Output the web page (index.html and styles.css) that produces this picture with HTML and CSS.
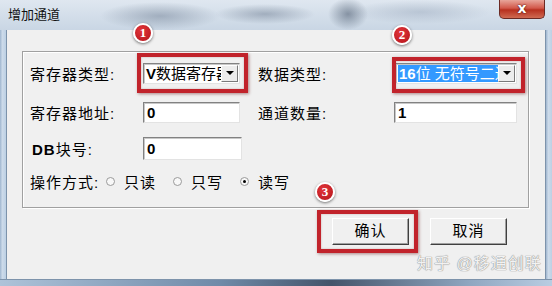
FILE: index.html
```html
<!DOCTYPE html>
<html lang="zh-CN">
<head>
    <meta charset="UTF-8">
    <title>增加通道</title>
    <link rel="stylesheet" href="styles.css">
</head>
<body>
    <div class="window">
        <div class="titlebar">
            <span class="title">增加通道</span>
            <div class="close-btn">x</div>
        </div>
        <div class="frame-row">
            <div class="frame-side"></div>
            <div class="client">
                <div class="group">
                    <div class="row row-1">
                        <span class="label">寄存器类型:</span>
                        <div class="combo combo-left">
                            <span class="combo-text"><b>V</b>数据寄存器</span>
                            <span class="combo-arrow"></span>
                        </div>
                        <span class="label label-right">数据类型:</span>
                        <div class="combo combo-right">
                            <span class="combo-text"><span class="selected"><b>16</b>位 无符号二进</span></span>
                            <span class="combo-arrow"></span>
                        </div>
                    </div>
                    <div class="row row-2">
                        <span class="label">寄存器地址:</span>
                        <div class="edit edit-left"><b>0</b></div>
                        <span class="label label-right">通道数量:</span>
                        <div class="edit edit-right"><b>1</b></div>
                    </div>
                    <div class="row row-3">
                        <span class="label label-db"><b>DB</b>块号:</span>
                        <div class="edit edit-db"><b>0</b></div>
                    </div>
                    <div class="row row-4">
                        <span class="label label-op">操作方式:</span>
                        <span class="radio"></span><span class="radio-text">只读</span>
                        <span class="radio"></span><span class="radio-text">只写</span>
                        <span class="radio checked"></span><span class="radio-text">读写</span>
                    </div>
                </div>
                <div class="buttons">
                    <div class="btn">确认</div>
                    <div class="btn">取消</div>
                </div>
            </div>
            <div class="frame-side"></div>
        </div>
        <div class="frame-bottom"></div>

        <!-- annotation marks drawn over the dialog -->
        <div class="mark-box box-1"></div>
        <div class="mark-box box-2"></div>
        <div class="mark-box box-3"></div>
        <div class="badge badge-1">1</div>
        <div class="badge badge-2">2</div>
        <div class="badge badge-3">3</div>
        <div class="watermark">知乎 @移通创联</div>
    </div>
</body>
</html>
```

FILE: styles.css
```css
* {
    box-sizing: border-box;
    margin: 0;
    padding: 0;
}
body {
    width: 552px;
    height: 286px;
    overflow: hidden;
    background: #ffffff;
    font-family: "Liberation Sans", "Noto Sans CJK SC", sans-serif;
    font-size: 15px;
    color: #000;
}
.window {
    position: relative;
    width: 552px;
    height: 286px;
    display: flex;
    flex-direction: column;
    background: #b9cde2;
}
.titlebar {
    height: 30px;
    display: flex;
    align-items: flex-start;
    justify-content: space-between;
    background:
        radial-gradient(ellipse 60px 14px at 160px 16px, rgba(120, 135, 155, 0.55), transparent),
        radial-gradient(ellipse 50px 10px at 265px 14px, rgba(110, 125, 145, 0.5), transparent),
        radial-gradient(ellipse 20px 16px at 348px 14px, rgba(80, 95, 115, 0.6), transparent),
        radial-gradient(ellipse 70px 12px at 420px 12px, rgba(150, 165, 185, 0.45), transparent),
        linear-gradient(#dfe7f0, #c9d6e4);
}
.title {
    font-size: 13px;
    line-height: 16px;
    margin: 7px 0 0 8px;
    color: #111;
}
.close-btn {
    width: 46px;
    height: 19px;
    margin-right: 7px;
    border: 1px solid #6b2a24;
    border-top: none;
    border-radius: 0 0 5px 5px;
    background: linear-gradient(#e8a59a, #d2584a 45%, #b7301f 55%, #cf6a52);
    color: #fff;
    font-family: "DejaVu Sans", sans-serif;
    font-weight: bold;
    font-size: 14px;
    line-height: 16px;
    text-align: center;
    text-shadow: 0 0 2px #5a1810, 0 0 1px #5a1810;
}
.frame-row {
    flex: 1;
    display: flex;
}
.frame-side {
    width: 7px;
    background: linear-gradient(90deg, #9fb6cf, #cddbea 40%, #bcd0e4);
    border-right: 1px solid #7d93ab;
}
.frame-row .frame-side:last-child {
    border-right: none;
    border-left: 1px solid #7d93ab;
}
.client {
    flex: 1;
    position: relative;
    background: #f0f0f0;
    padding: 21px 16px 0 15px;
}
.frame-bottom {
    height: 7px;
    border-top: 1px solid #7d93ab;
    background: linear-gradient(90deg, #aec3d9, #6f8aa8 40%, #44546a 60%, #8fa6c0 85%, #b9cde2);
}
.group {
    height: 157px;
    border: 1px solid #a0a0a0;
    box-shadow: inset 1px 1px 0 #fff, 1px 1px 0 #fff;
    padding: 10px 0 0 7px;
}
.row {
    display: flex;
    align-items: center;
}
.row-1 { height: 22px; }
.row-2 { height: 22px; margin-top: 17px; }
.row-3 { height: 23px; margin-top: 14px; }
.row-4 { height: 20px; margin-top: 11px; }
.label {
    width: 113px;
    white-space: nowrap;
    letter-spacing: 1px;
}
.label-right {
    width: 136px;
    margin-left: 18px;
}
.label-db {
    padding-left: 2px;
}
.label-op {
    width: 76px;
}
b {
    font-family: "Liberation Sans", sans-serif;
    font-weight: bold;
}
.combo {
    height: 21px;
    display: flex;
    align-items: center;
    background: #fff;
    border: 1px solid;
    border-color: #828282 #e3e3e3 #e3e3e3 #828282;
    box-shadow: inset 1px 1px 0 #c8c8c8;
    overflow: hidden;
}
.combo-left { width: 97px; }
.combo-right { width: 122px; margin-left: 1px; }
.combo-text {
    flex: 1;
    overflow: hidden;
    white-space: nowrap;
    padding-left: 2px;
    line-height: 17px;
}
.selected {
    background: #3399ff;
    color: #fff;
    padding: 0 3px 0 1px;
}
.combo-arrow {
    width: 17px;
    height: 17px;
    margin-right: 1px;
    background: #ececec;
    border: 1px solid;
    border-color: #fdfdfd #7a7a7a #7a7a7a #fdfdfd;
    display: flex;
    align-items: center;
    justify-content: center;
}
.combo-arrow::after {
    content: "";
    border-left: 4px solid transparent;
    border-right: 4px solid transparent;
    border-top: 4px solid #000;
}
.edit {
    height: 21px;
    background: #fff;
    border: 1px solid;
    border-color: #828282 #e3e3e3 #e3e3e3 #828282;
    box-shadow: inset 1px 1px 0 #c8c8c8;
    padding-left: 3px;
    line-height: 19px;
}
.edit-left { width: 97px; }
.edit-right { width: 123px; }
.edit-db { width: 99px; height: 23px; line-height: 21px; }
.radio {
    width: 9px;
    height: 9px;
    border-radius: 50%;
    border: 1px solid #9a9a9a;
    background: #f8f8f8;
    margin-right: 9px;
    display: flex;
    align-items: center;
    justify-content: center;
}
.radio.checked::after {
    content: "";
    width: 3px;
    height: 3px;
    border-radius: 50%;
    background: #000;
}
.radio-text {
    width: 49px;
    letter-spacing: 1px;
}
.buttons {
    display: flex;
    justify-content: flex-end;
    gap: 21px;
    margin: 10px 22px 0 0;
}
.btn {
    width: 77px;
    height: 27px;
    border: 1px solid;
    border-color: #fff #404040 #404040 #fff;
    box-shadow: inset -1px -1px 0 #a0a0a0;
    background: #f0f0f0;
    text-align: center;
    line-height: 24px;
    letter-spacing: 1px;
}
.mark-box {
    position: absolute;
    border: 4px solid #c1232b;
    box-shadow: 1px 1px 3px rgba(90, 0, 0, 0.45), inset 0 0 2px rgba(90, 0, 0, 0.3);
}
.box-1 { left: 137px; top: 53px; width: 111px; height: 40px; }
.box-2 { left: 392px; top: 57px; width: 133px; height: 36px; }
.box-3 { left: 317px; top: 210px; width: 101px; height: 43px; }
.badge {
    position: absolute;
    width: 20px;
    height: 20px;
    border-radius: 50%;
    background: radial-gradient(circle at 40% 35%, #e2353a, #b3141b);
    border: 2px solid #fff;
    box-shadow: 0 1px 3px rgba(0, 0, 0, 0.55);
    color: #fff;
    font-family: "Liberation Serif", serif;
    font-weight: bold;
    font-size: 13px;
    line-height: 16px;
    text-align: center;
}
.badge-1 { left: 133px; top: 23px; }
.badge-2 { left: 392px; top: 25px; }
.badge-3 { left: 315px; top: 182px; }
.watermark {
    position: absolute;
    left: 417px;
    top: 250px;
    font-size: 16px;
    letter-spacing: 1px;
    color: #f2f2f2;
    text-shadow: 0 0 1px #8a8a8a, 0 0 1px #8a8a8a;
}
```
